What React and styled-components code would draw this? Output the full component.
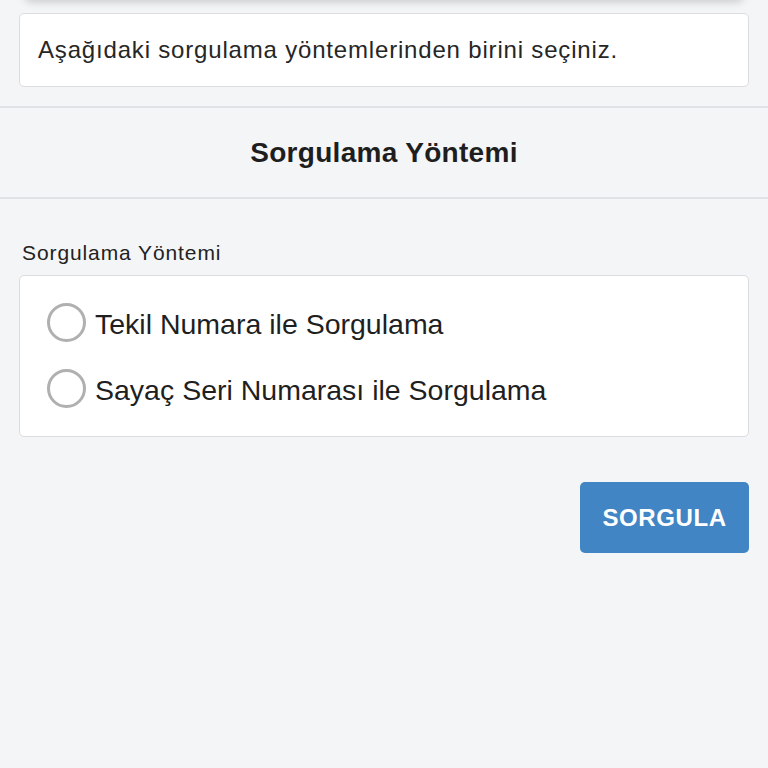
import React, { useState } from 'react';
import styled, { createGlobalStyle } from 'styled-components';

const GlobalStyle = createGlobalStyle`
  html, body {
    margin: 0;
    padding: 0;
    background: #f4f5f7;
    font-family: "Liberation Sans", Arial, Helvetica, sans-serif;
    color: #222;
  }
`;

const Page = styled.div`
  width: 768px;
  min-height: 768px;
  background: #f4f5f7;
  overflow: hidden;
`;

const TopCard = styled.div`
  height: 40px;
  margin: -40px 24px 0;
  background: #fff;
  border-radius: 0 0 8px 8px;
  box-shadow: 0 2px 8px rgba(0, 0, 0, 0.18);
`;

const InfoCard = styled.div`
  margin: 13px 19px 0;
  height: 74px;
  box-sizing: border-box;
  display: flex;
  align-items: center;
  padding: 0 18px;
  background: #fff;
  border: 1px solid #dcdde0;
  border-radius: 5px;
  font-size: 24px;
  letter-spacing: 0.82px;
  color: #262626;
`;

const SectionHeader = styled.div`
  margin-top: 19px;
  height: 93px;
  box-sizing: border-box;
  border-top: 2px solid #e1e2e5;
  border-bottom: 2px solid #e1e2e5;
  display: flex;
  align-items: center;
  justify-content: center;
  font-size: 28px;
  font-weight: 700;
  letter-spacing: 0.3px;
  color: #1e1e1e;
`;

const Form = styled.div`
  padding: 42px 19px 0;
  display: flex;
  flex-direction: column;
`;

const Label = styled.div`
  padding-left: 3px;
  font-size: 21px;
  line-height: 24px;
  letter-spacing: 0.9px;
  color: #222;
  margin-bottom: 10px;
`;

const OptionsCard = styled.div`
  height: 162px;
  box-sizing: border-box;
  background: #fff;
  border: 1px solid #dcdde0;
  border-radius: 5px;
  padding: 27px 0 0 27px;
  display: flex;
  flex-direction: column;
  gap: 27px;
`;

const Option = styled.label`
  display: flex;
  align-items: center;
  gap: 9px;
  font-size: 28.5px;
  color: #1f1f1f;
  cursor: pointer;
  height: 39px;
`;

const OptionText = styled.span`
  padding-top: 4px;
`;

const Circle = styled.span`
  width: 39px;
  height: 39px;
  box-sizing: border-box;
  border-radius: 50%;
  border: 3px solid ${(p) => (p.checked ? '#4084c4' : '#b0b0b0')};
  display: flex;
  align-items: center;
  justify-content: center;
  flex-shrink: 0;
  &::after {
    content: '';
    width: 19px;
    height: 19px;
    border-radius: 50%;
    background: #4084c4;
    display: ${(p) => (p.checked ? 'block' : 'none')};
  }
`;

const Actions = styled.div`
  display: flex;
  justify-content: flex-end;
  margin-top: 45px;
`;

const Button = styled.button`
  width: 169px;
  height: 71px;
  border: none;
  border-radius: 5px;
  background: #4185c5;
  color: #fff;
  font-family: inherit;
  font-size: 24px;
  font-weight: 700;
  letter-spacing: 0.6px;
  cursor: pointer;
`;

const options = ['Tekil Numara ile Sorgulama', 'Sayaç Seri Numarası ile Sorgulama'];

const App = () => {
  const [selected, setSelected] = useState(null);
  return (
    <>
      <GlobalStyle />
      <Page>
        <TopCard />
        <InfoCard>Aşağıdaki sorgulama yöntemlerinden birini seçiniz.</InfoCard>
        <SectionHeader>Sorgulama Yöntemi</SectionHeader>
        <Form>
          <Label>Sorgulama Yöntemi</Label>
          <OptionsCard>
            {options.map((o, i) => (
              <Option key={o} onClick={() => setSelected(i)}>
                <Circle checked={selected === i} />
                <OptionText>{o}</OptionText>
              </Option>
            ))}
          </OptionsCard>
          <Actions>
            <Button type="button">SORGULA</Button>
          </Actions>
        </Form>
      </Page>
    </>
  );
};

export default App;
